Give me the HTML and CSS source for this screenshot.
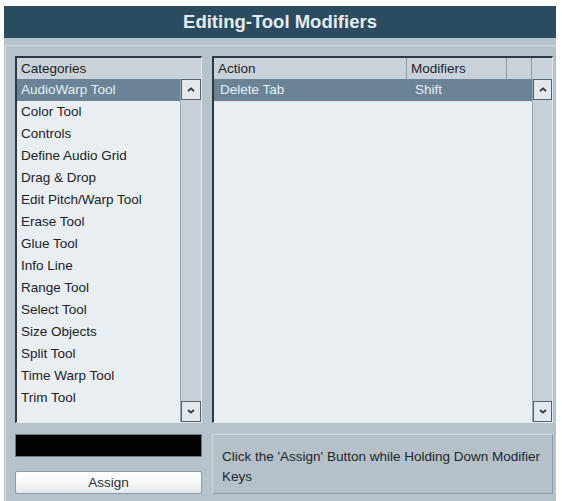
FILE: index.html
```html
<!DOCTYPE html>
<html lang="en">
<head>
    <meta charset="UTF-8">
    <title>Editing-Tool Modifiers</title>
    <link rel="stylesheet" href="styles.css">
</head>
<body>
    <div class="window">
        <div class="titlebar">Editing-Tool Modifiers</div>
        <div class="frame">
            <div class="panel">
                <div class="listbox categories">
                    <div class="list-head">
                        <div class="col col-name">Categories</div>
                    </div>
                    <div class="list-main">
                        <div class="rows">
                            <div class="row selected"><span>AudioWarp Tool</span></div>
                            <div class="row"><span>Color Tool</span></div>
                            <div class="row"><span>Controls</span></div>
                            <div class="row"><span>Define Audio Grid</span></div>
                            <div class="row"><span>Drag &amp; Drop</span></div>
                            <div class="row"><span>Edit Pitch/Warp Tool</span></div>
                            <div class="row"><span>Erase Tool</span></div>
                            <div class="row"><span>Glue Tool</span></div>
                            <div class="row"><span>Info Line</span></div>
                            <div class="row"><span>Range Tool</span></div>
                            <div class="row"><span>Select Tool</span></div>
                            <div class="row"><span>Size Objects</span></div>
                            <div class="row"><span>Split Tool</span></div>
                            <div class="row"><span>Time Warp Tool</span></div>
                            <div class="row"><span>Trim Tool</span></div>
                        </div>
                        <div class="scrollbar">
                            <div class="sb-btn">
                                <svg width="8" height="5" viewBox="0 0 8 5"><path d="M1 4 L4 1.3 L7 4" fill="none" stroke="#2b3238" stroke-width="1.7"/></svg>
                            </div>
                            <div class="sb-track"></div>
                            <div class="sb-btn">
                                <svg width="8" height="5" viewBox="0 0 8 5"><path d="M1 1 L4 3.7 L7 1" fill="none" stroke="#2b3238" stroke-width="1.7"/></svg>
                            </div>
                        </div>
                    </div>
                </div>

                <div class="listbox actions">
                    <div class="list-head">
                        <div class="col col-action">Action</div>
                        <div class="col col-mod">Modifiers</div>
                        <div class="col col-blank"></div>
                        <div class="col col-end"></div>
                    </div>
                    <div class="list-main">
                        <div class="rows">
                            <div class="row selected">
                                <span class="cell-action">Delete Tab</span>
                                <span class="cell-mod">Shift</span>
                            </div>
                            <div class="focus-line"></div>
                        </div>
                        <div class="scrollbar">
                            <div class="sb-btn">
                                <svg width="8" height="5" viewBox="0 0 8 5"><path d="M1 4 L4 1.3 L7 4" fill="none" stroke="#2b3238" stroke-width="1.7"/></svg>
                            </div>
                            <div class="sb-track"></div>
                            <div class="sb-btn">
                                <svg width="8" height="5" viewBox="0 0 8 5"><path d="M1 1 L4 3.7 L7 1" fill="none" stroke="#2b3238" stroke-width="1.7"/></svg>
                            </div>
                        </div>
                    </div>
                </div>

                <div class="assign-col">
                    <div class="keys-field"></div>
                    <button class="assign-btn">Assign</button>
                </div>

                <div class="hint">Click the 'Assign' Button while Holding Down Modifier Keys</div>
            </div>
        </div>
    </div>
</body>
</html>
```

FILE: styles.css
```css
body {
    margin: 0;
    background: #ffffff;
    font-family: "Liberation Sans", Arial, sans-serif;
    font-size: 13.5px;
    color: #1c2227;
}

.window {
    width: 552px;
    margin: 6px 0 0 4px;
}

.titlebar {
    height: 32px;
    background: #2b4b60;
    color: #e3ebf0;
    font-weight: bold;
    font-size: 18.5px;
    display: flex;
    align-items: center;
    justify-content: center;
    padding-bottom: 1px;
    box-sizing: border-box;
}

.frame {
    background: #b7c3cb;
    height: 463px;
    padding: 7px 0 0 1px;
    box-sizing: border-box;
}

.panel {
    height: 100%;
    border-top: 1px solid #d2dbe1;
    border-left: 1px solid #d2dbe1;
    box-sizing: border-box;
    padding: 10px 2px 3px 9px;
    display: grid;
    grid-template-columns: 187px 341px;
    grid-template-rows: 367px 60px;
    column-gap: 10px;
    row-gap: 11px;
}

/* list boxes */
.listbox {
    border-top: 2px solid #2c3942;
    border-left: 2px solid #2c3942;
    border-right: 1px solid #e3e9ed;
    border-bottom: 1px solid #e3e9ed;
    background: #e9eef3;
    display: flex;
    flex-direction: column;
    overflow: hidden;
}

.list-head {
    height: 21px;
    display: flex;
    background: #c9d2d9;
    flex-shrink: 0;
}

.col {
    line-height: 21px;
    padding-left: 4px;
    border-right: 1px solid #8e9ba5;
    box-sizing: border-box;
}

.categories .col-name {
    flex: 1;
    border-right: none;
}

.col-action { width: 193px; }
.col-mod { width: 100px; }
.col-blank { width: 25px; }
.col-end { flex: 1; border-right: none; }

.list-main {
    flex: 1;
    display: flex;
    min-height: 0;
}

.rows {
    flex: 1;
}

.row {
    height: 22px;
    line-height: 22px;
    padding-left: 4px;
    white-space: nowrap;
    display: flex;
}

.row.selected {
    background: #6b8397;
    color: #e6eef4;
}

.cell-action { width: 193px; padding-left: 2px; }
.cell-mod { padding-left: 2px; }

.focus-line {
    height: 1px;
    background: #f1dfe6;
}

/* scrollbars */
.scrollbar {
    width: 20px;
    display: flex;
    flex-direction: column;
    background: #c6d0d8;
    border-left: 1px solid #9aa7b0;
}

.sb-btn {
    height: 19px;
    background: #e3e8ec;
    border: 1px solid #56626b;
    display: flex;
    align-items: center;
    justify-content: center;
    flex-shrink: 0;
}

.sb-track {
    flex: 1;
}

.actions .scrollbar {
    width: 19px;
}

/* bottom area */
.assign-col {
    display: flex;
    flex-direction: column;
    justify-content: space-between;
}

.keys-field {
    height: 23px;
    background: #030303;
    border: 1px solid #6e7a83;
    box-sizing: border-box;
}

.assign-btn {
    height: 23px;
    border: 1px solid #8f9ca6;
    border-radius: 2px;
    background: linear-gradient(#ffffff, #f4f6f8 60%, #e2e7eb);
    font-family: "Liberation Sans", Arial, sans-serif;
    font-size: 13.5px;
    color: #2a3036;
    padding: 0;
}

.hint {
    background: #b5c1c9;
    border: 1px solid #cfd8de;
    border-right-color: #8d9aa4;
    border-bottom-color: #8d9aa4;
    padding: 12px 8px 0 9px;
    line-height: 20px;
    color: #20262b;
}
```
